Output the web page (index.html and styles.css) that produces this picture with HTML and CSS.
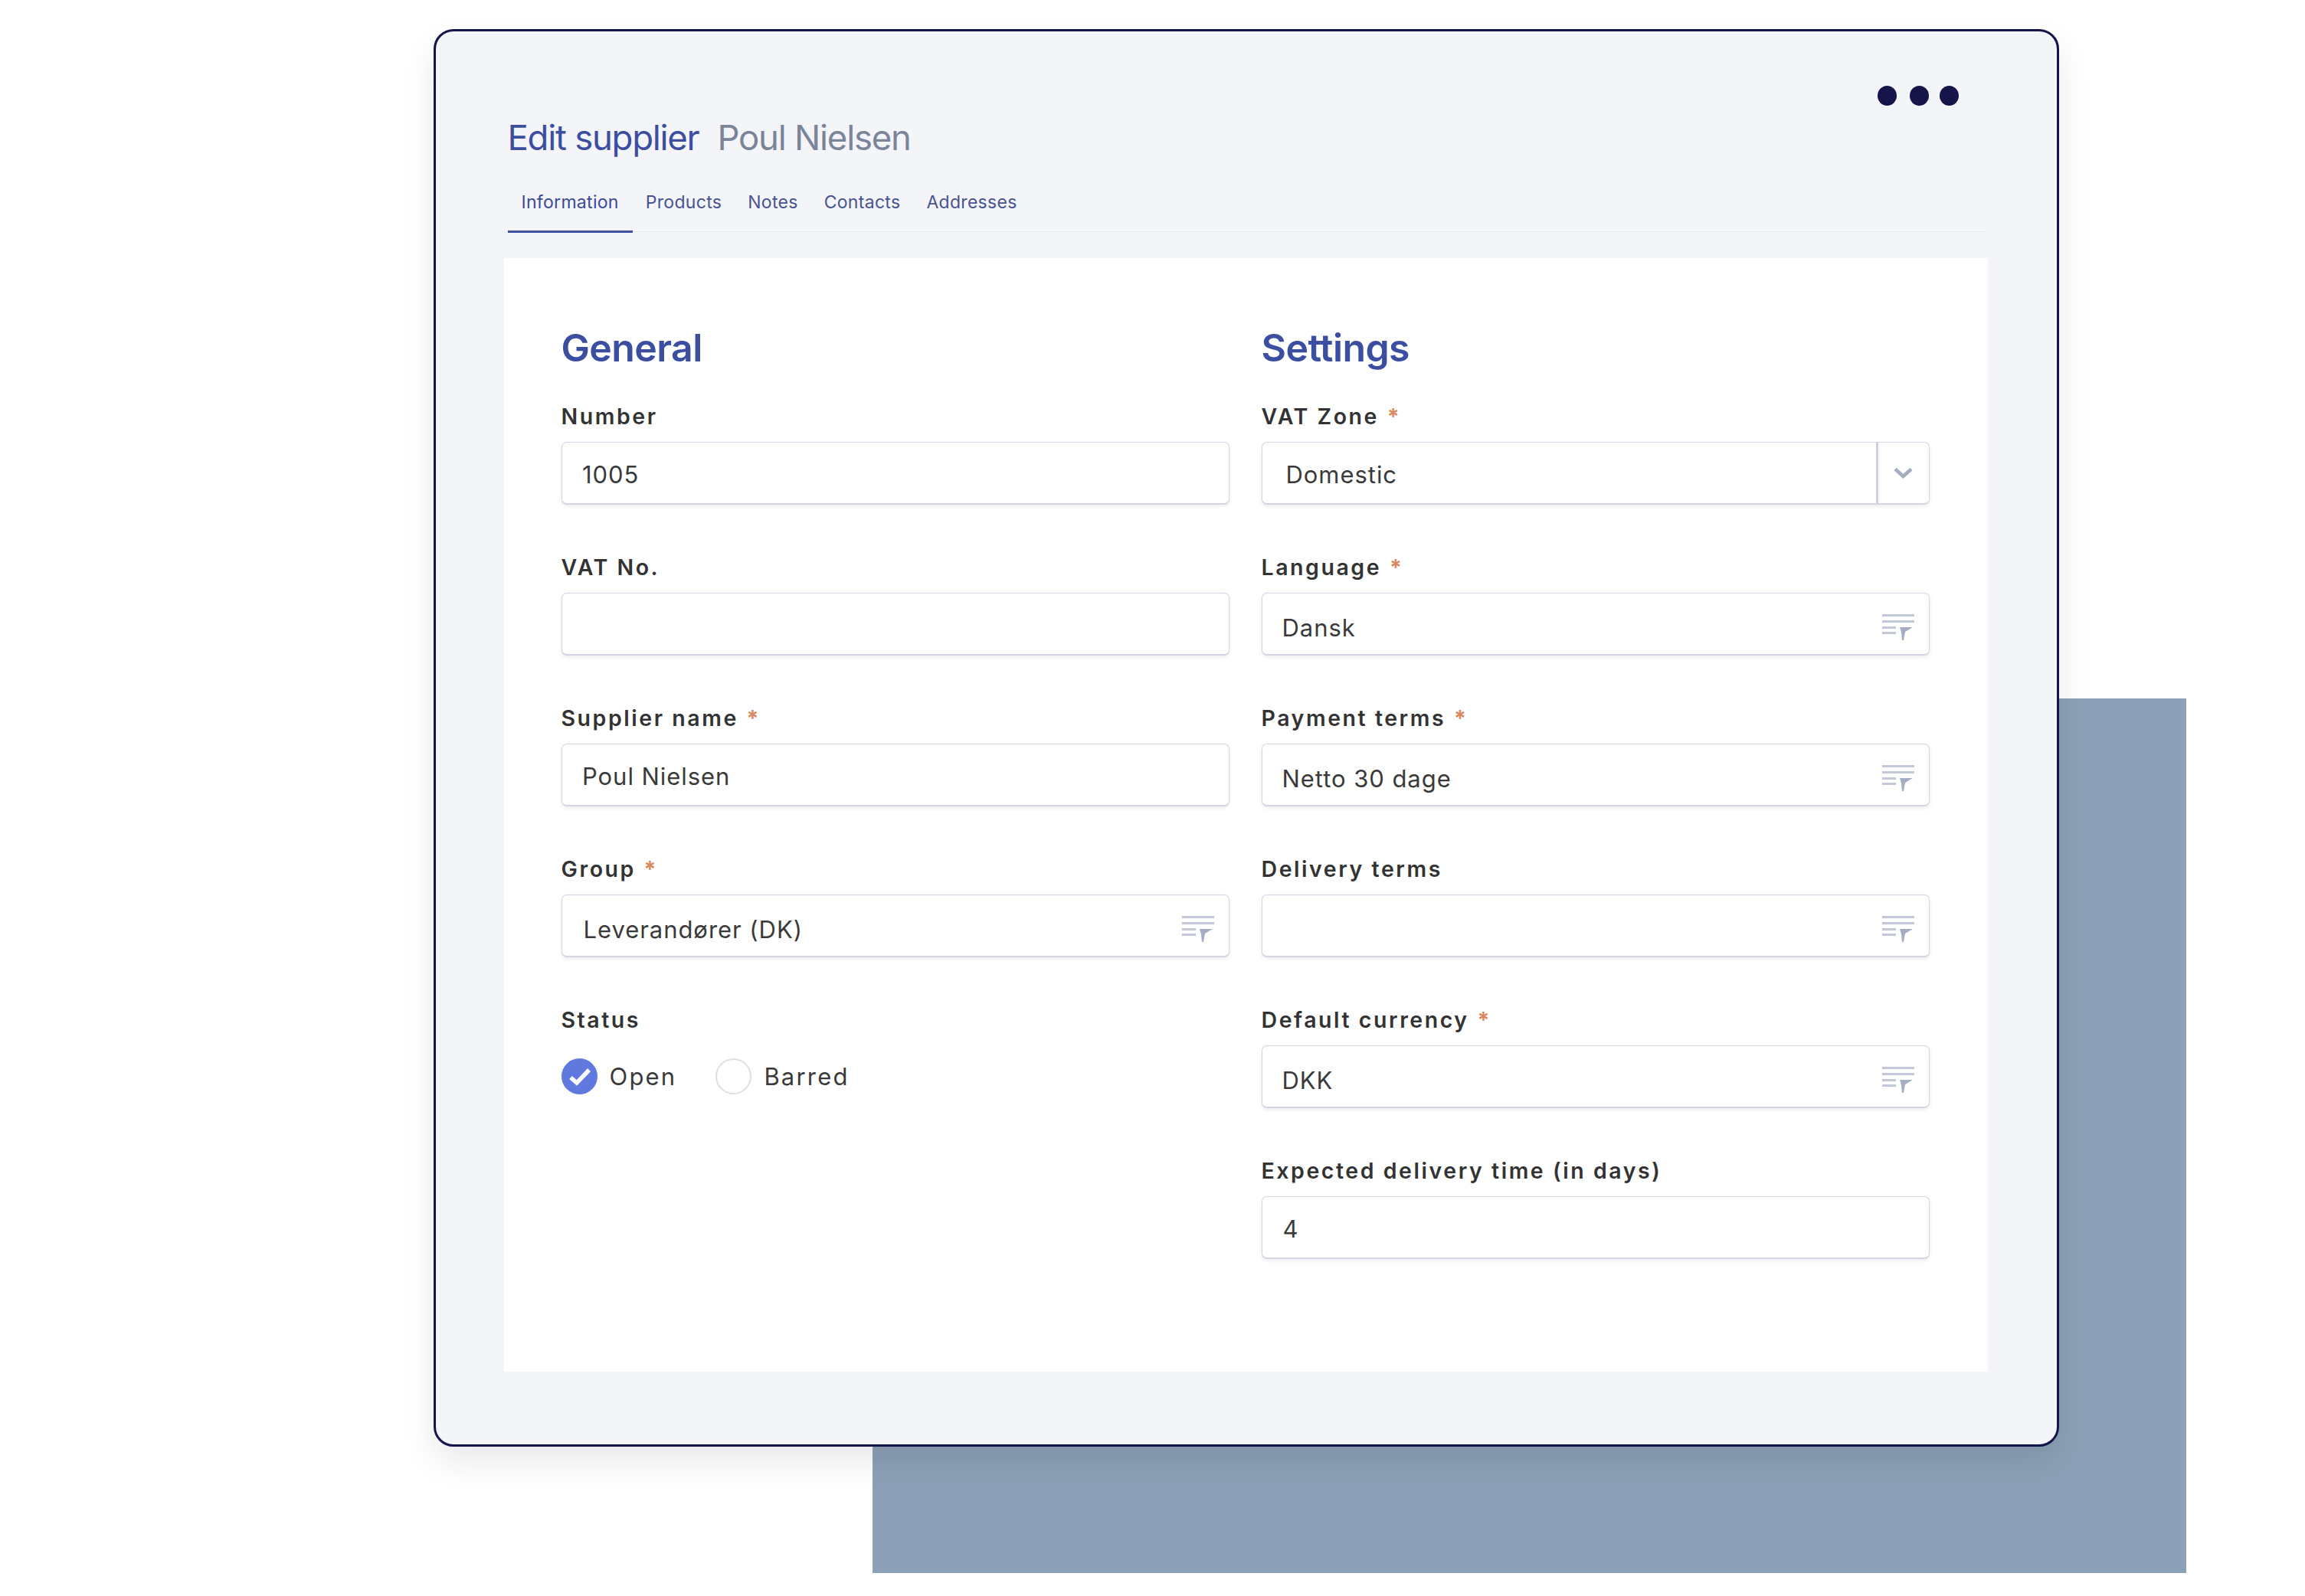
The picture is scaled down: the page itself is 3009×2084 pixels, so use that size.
FILE: index.html
```html
<!DOCTYPE html>
<html lang="en">
<head>
<meta charset="utf-8">
<title>Edit supplier</title>
<link rel="stylesheet" href="styles.css">
</head>
<body>
<svg class="defs" width="0" height="0" aria-hidden="true">
  <symbol id="filter" viewBox="0 0 42 34">
    <rect class="fl" x="0" y="0" width="42" height="3"/>
    <rect class="fl" x="0" y="8" width="42" height="3"/>
    <rect class="fl" x="0" y="16" width="18" height="3"/>
    <rect class="fl" x="0" y="23" width="18" height="3"/>
    <path class="ff" d="M23 17H40L30 23L28 34H26L25 24Z"/>
  </symbol>
</svg>
<div class="backdrop"></div>
<main class="card">
  <header class="head">
    <h1 class="title">Edit supplier<span class="sub">Poul Nielsen</span></h1>
    <div class="dots"><i></i><i></i><i></i></div>
  </header>
  <nav class="tabs">
    <a class="tab active">Information</a>
    <a class="tab">Products</a>
    <a class="tab">Notes</a>
    <a class="tab">Contacts</a>
    <a class="tab">Addresses</a>
  </nav>
  <section class="panel">
    <div class="col">
      <h2 class="heading">General</h2>
      <div class="field"><div class="label">Number</div><div class="box text">1005</div></div>
      <div class="field"><div class="label">VAT No.</div><div class="box text"></div></div>
      <div class="field"><div class="label">Supplier name <b>*</b></div><div class="box text">Poul Nielsen</div></div>
      <div class="field"><div class="label">Group <b>*</b></div><div class="box lookup"><span>Leverandører (DK)</span><svg class="ficon"><use href="#filter"/></svg></div></div>
      <div class="field">
        <div class="label">Status</div>
        <div class="radios">
          <span class="radio on"><svg viewBox="0 0 47 47" width="47" height="47"><path d="M12 25L20 32L36 15" fill="none" stroke="#fff" stroke-width="5.5"/></svg></span><span class="rlabel">Open</span>
          <span class="radio off"></span><span class="rlabel">Barred</span>
        </div>
      </div>
    </div>
    <div class="col">
      <h2 class="heading">Settings</h2>
      <div class="field"><div class="label">VAT Zone <b>*</b></div><div class="box select"><span class="val">Domestic</span><span class="caret"><svg viewBox="0 0 25 15" width="25" height="15"><path d="M2 2.5L12.5 12L23 2.5" fill="none" stroke="#a4acc0" stroke-width="4.6"/></svg></span></div></div>
      <div class="field"><div class="label">Language <b>*</b></div><div class="box lookup r"><span>Dansk</span><svg class="ficon"><use href="#filter"/></svg></div></div>
      <div class="field"><div class="label">Payment terms <b>*</b></div><div class="box lookup r"><span>Netto 30 dage</span><svg class="ficon"><use href="#filter"/></svg></div></div>
      <div class="field"><div class="label">Delivery terms</div><div class="box lookup r"><span></span><svg class="ficon"><use href="#filter"/></svg></div></div>
      <div class="field"><div class="label">Default currency <b>*</b></div><div class="box lookup r"><span>DKK</span><svg class="ficon"><use href="#filter"/></svg></div></div>
      <div class="field"><div class="label">Expected delivery time (in days)</div><div class="box text r">4</div></div>
    </div>
  </section>
</main>
</body>
</html>
```
FILE: styles.css
```css
* { box-sizing: border-box; }
html, body { margin: 0; padding: 0; background: #fff; }
body {
  position: relative;
  width: 3009px;
  height: 2084px;
  overflow: hidden;
  padding: 38px 0 0 566px;
  font-family: Inter, "Noto Sans", sans-serif;
  color: #3a3a3a;
}
.defs { position: absolute; }
.fl { fill: #c3c9d9; }
.ff { fill: #a4adc3; }
.backdrop {
  position: absolute;
  left: 1139px;
  top: 912px;
  width: 1715px;
  height: 1142px;
  background: #8ca1b7;
}
.card {
  position: relative;
  width: 2122px;
  height: 1851px;
  background: #f4f5f9;
  border: 3.5px solid #15154a;
  border-radius: 26px;
  box-shadow: 0 20px 44px rgba(0, 0, 0, .09);
  padding: 0 90.5px 0 88.5px;
}
.head {
  display: flex;
  justify-content: space-between;
  align-items: flex-start;
  height: 168px;
  padding: 70.5px 38px 0 5px;
}
.title {
  margin: 41px 0 0;
  font-size: 45.5px;
  line-height: 54px;
  font-weight: 400;
  letter-spacing: -1.25px;
  color: #3b4ea0;
  white-space: nowrap;
}
.sub { margin-left: 24px; color: #7b8599; }
.dots { display: flex; }
.dots i { display: block; width: 25px; height: 26px; border-radius: 50%; background: #15154a; }
.dots i + i { margin-left: 17px; }
.dots i + i + i { margin-left: 14px; }
.tabs {
  display: flex;
  align-items: flex-end;
  height: 98px;
  margin: -4px 2px 0 5px;
  border-bottom: 1.5px solid #e6e8ef;
}
.tab {
  padding: 0 17px 20px;
  font-size: 23px;
  line-height: 34px;
  letter-spacing: .3px;
  color: #46548f;
  margin-bottom: -1.5px;
  border-bottom: 3.5px solid transparent;
}
.tab.active { padding: 0 18px 20px; border-bottom-color: #3f51a3; color: #3b4a96; }
.panel {
  display: grid;
  grid-template-columns: 872px 872px;
  column-gap: 42px;
  height: 1454px;
  margin-top: 34px;
  padding: 0 75px;
  background: #fff;
}
.heading {
  margin: 0;
  height: 187px;
  padding-top: 87px;
  font-size: 50px;
  line-height: 60px;
  font-weight: 600;
  letter-spacing: -.6px;
  color: #3b4ea0;
}
.field { height: 197px; }
.label {
  height: 36px;
  margin-bottom: 17px;
  font-size: 28.5px;
  line-height: 40px;
  font-weight: 600;
  letter-spacing: 2.55px;
  color: #333;
}
.label b { font-weight: 700; color: #d8875f; margin-left: 1px; }
.box {
  display: flex;
  align-items: center;
  height: 82px;
  background: #fff;
  border: 1.5px solid #d3d6e2;
  border-bottom-width: 2px;
  border-radius: 7px;
  box-shadow: 0 2px 5px rgba(60, 70, 110, .10);
  font-size: 31px;
  letter-spacing: .95px;
  color: #3a3a3a;
}
.text { padding: 4px 0 0 26.5px; }
.text.r { padding-left: 27px; }
.select { justify-content: space-between; padding-left: 31px; }
.select .val { padding-top: 3px; }
.caret {
  display: flex;
  align-items: center;
  justify-content: center;
  align-self: stretch;
  width: 69px;
  border-left: 3px solid #cdd1dc;
}
.lookup { justify-content: space-between; padding: 0 19px 0 28px; }
.lookup.r { padding-left: 26px; }
.lookup span { padding-top: 9px; }
.ficon { width: 42px; height: 34px; margin-top: 8px; }
.radios { display: flex; align-items: center; margin-top: 34px; }
.radio { display: block; width: 47px; height: 47px; border-radius: 50%; }
.radio svg { display: block; }
.radio.on { background: #6079de; }
.radio.off { background: #fff; border: 2px solid #dcdfe7; margin-left: 51px; }
.rlabel { margin-left: 16px; font-size: 31px; letter-spacing: 2.2px; color: #3a3a3a; }
```
